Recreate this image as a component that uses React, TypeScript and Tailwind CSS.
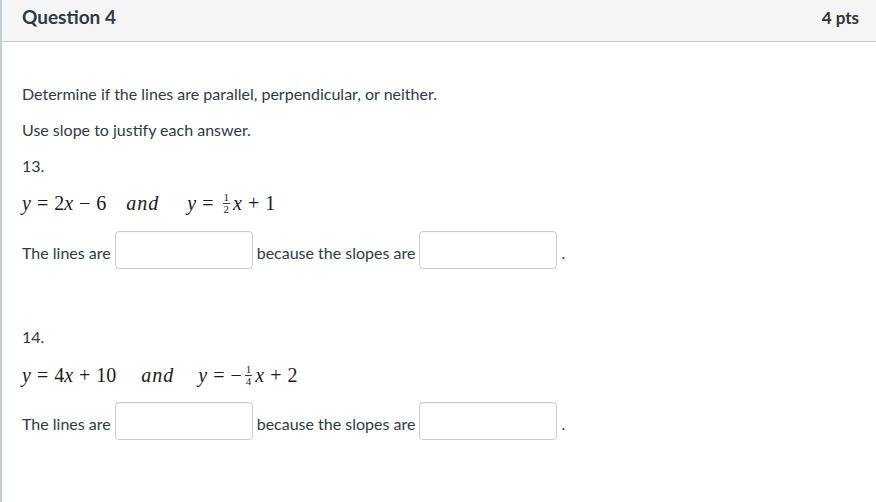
import React from 'react';

const Frac = ({ n, d }: { n: string; d: string }) => (
  <span className="inline-flex flex-col items-center mx-[3px] text-[11px] leading-[13px]">
    <span className="px-[1px] -mb-[1px]">{n}</span>
    <span className="block w-full border-t border-[#2d3b45]" />
    <span className="px-[1px] -mt-[1px]">{d}</span>
  </span>
);

const V = ({ c }: { c: string }) => <span className="italic">{c}</span>;

const Op = ({ c }: { c: string }) => <span className="mx-[6px]">{c}</span>;

const mathFont = { fontFamily: '"Liberation Serif", "DejaVu Serif", serif' };

function Eq13() {
  return (
    <div className="flex items-center h-6 text-[20px] text-[#1a1a1a]" style={mathFont}>
      <span>
        <V c="y" />
        <Op c="=" />2<V c="x" />
        <Op c="−" />6
      </span>
      <span className="italic ml-[20px] tracking-[1px]">and</span>
      <span className="ml-[28px] inline-flex items-center">
        <V c="y" />
        <Op c="=" />
        <Frac n="1" d="2" />
        <V c="x" />
        <Op c="+" />1
      </span>
    </div>
  );
}

function Eq14() {
  return (
    <div className="flex items-center h-6 text-[20px] text-[#1a1a1a]" style={mathFont}>
      <span>
        <V c="y" />
        <Op c="=" />4<V c="x" />
        <Op c="+" />10
      </span>
      <span className="italic ml-[25px] tracking-[1px]">and</span>
      <span className="ml-[24px] inline-flex items-center">
        <V c="y" />
        <Op c="=" />−
        <Frac n="1" d="4" />
        <V c="x" />
        <Op c="+" />2
      </span>
    </div>
  );
}

function AnswerRow() {
  return (
    <div className="flex items-center h-[38px]">
      <span className="relative top-[3px]">The lines are</span>
      <input className="mx-[4px] w-[138px] h-[38px] rounded border border-[#c7cdd1] bg-white shadow-[inset_0_1px_1px_rgba(0,0,0,0.04)] outline-none" />
      <span className="relative top-[3px]">because the slopes are</span>
      <input className="mx-[4px] w-[138px] h-[38px] rounded border border-[#c7cdd1] bg-white shadow-[inset_0_1px_1px_rgba(0,0,0,0.04)] outline-none" />
      <span className="relative top-[3px]">.</span>
    </div>
  );
}

export default function App() {
  return (
    <div className="w-[876px] h-[502px] overflow-hidden bg-white border-l-2 border-[#c7cdd1] text-[#2d3b45]" style={{ fontFamily: 'Lato, "Liberation Sans", sans-serif' }}>
      <header className="h-[42px] bg-[#f5f5f5] border-b border-[#c7cdd1] flex items-center justify-between pl-[20px] pr-[17px] pb-[6px]">
        <h2 className="text-[19px] font-bold">Question 4</h2>
        <span className="text-[17px] font-bold text-[#333]">4 pts</span>
      </header>
      <div className="pl-[20px] pt-[40px] text-[16px] leading-6">
        <p>Determine if the lines are parallel, perpendicular, or neither.</p>
        <p className="mt-3">Use slope to justify each answer.</p>
        <p className="mt-3">13.</p>
        <div className="mt-[13px]">
          <Eq13 />
        </div>
        <div className="mt-[16px]">
          <AnswerRow />
        </div>
        <p className="mt-[56px]">14.</p>
        <div className="mt-[14px]">
          <Eq14 />
        </div>
        <div className="mt-[15px]">
          <AnswerRow />
        </div>
      </div>
    </div>
  );
}
